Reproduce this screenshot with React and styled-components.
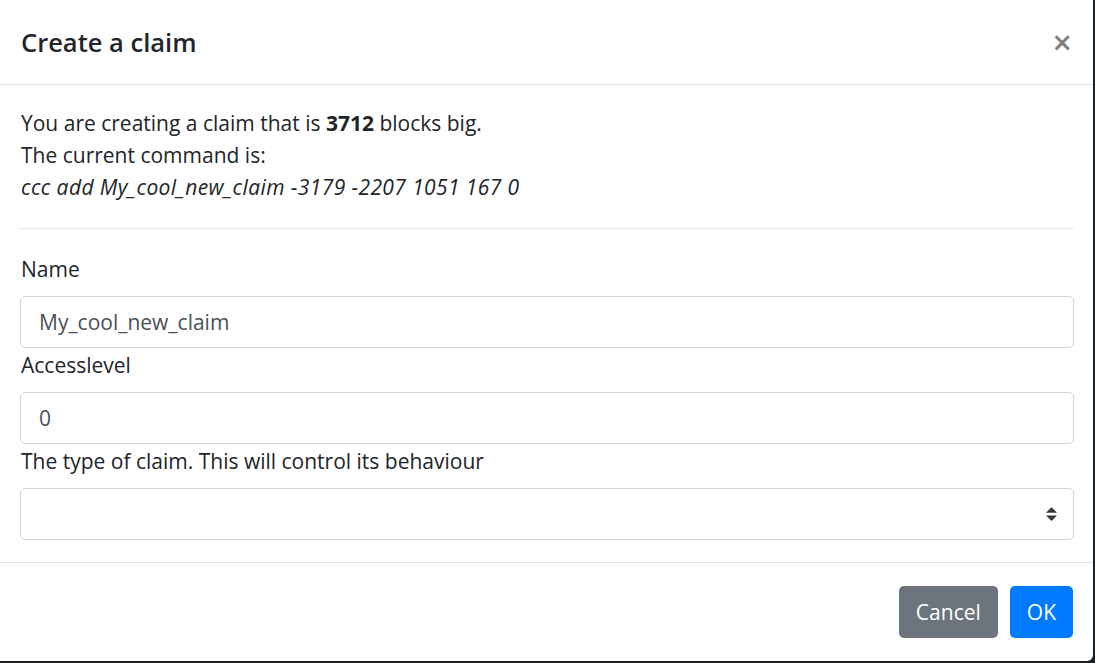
import React, { useState } from "react";
import styled, { createGlobalStyle } from "styled-components";

const GlobalStyle = createGlobalStyle`
  html, body {
    margin: 0;
    padding: 0;
    background-color: #1d2023;
    font-family: "Open Sans", "Noto Sans", sans-serif;
  }
  * {
    box-sizing: border-box;
  }
`;

const App = () => {
  const [name, setName] = useState("My_cool_new_claim");
  const [access, setAccess] = useState("0");
  const [type, setType] = useState("");

  return (
    <>
      <GlobalStyle />
      <Page>
        <Modal>
          <Header>
            <Title>Create a claim</Title>
            <Close aria-label="Close">&times;</Close>
          </Header>

          <Body>
            <Info>
              You are creating a claim that is <b>3712</b> blocks big.
              <br />
              The current command is:
              <br />
              <i>ccc add My_cool_new_claim -3179 -2207 1051 167 0</i>
            </Info>
            <Divider />

            <Label>Name</Label>
            <Input
              type="text"
              value={name}
              onChange={(e) => setName(e.target.value)}
            />

            <Label>Accesslevel</Label>
            <Input
              type="number"
              value={access}
              onChange={(e) => setAccess(e.target.value)}
            />

            <Label>The type of claim. This will control its behaviour</Label>
            <SelectWrap>
              <Select value={type} onChange={(e) => setType(e.target.value)}>
                <option value=""></option>
              </Select>
              <Arrows width="11" height="14" viewBox="0 0 4 5">
                <path fill="#343a40" d="M2 0L0 2h4zm0 5L0 3h4z" />
              </Arrows>
            </SelectWrap>
          </Body>

          <Footer>
            <Button variant="secondary">Cancel</Button>
            <Button variant="primary">OK</Button>
          </Footer>
        </Modal>
      </Page>
    </>
  );
};

export default App;

const Page = styled.div`
  width: 1095px;
  height: 663px;
  overflow: hidden;
`;

const Modal = styled.div`
  width: 1093px;
  height: 661px;
  background-color: #fff;
  border-bottom-right-radius: 6px;
  color: #212529;
  display: flex;
  flex-direction: column;
`;

const Header = styled.div`
  height: 85px;
  padding: 0 21px;
  border-bottom: 1px solid #dee2e6;
  display: flex;
  align-items: center;
  justify-content: space-between;
`;

const Title = styled.h5`
  margin: 0;
  font-size: 25.5px;
  font-weight: 600;
  line-height: 40px;
`;

const Close = styled.button`
  border: none;
  background: transparent;
  padding: 0;
  font-family: "Open Sans", sans-serif;
  font-size: 34px;
  font-weight: 600;
  line-height: 1;
  color: #000;
  opacity: 0.5;
  text-shadow: 0 1px 0 #fff;
  cursor: pointer;
`;

const Body = styled.div`
  padding: 22px 19px 22px 20px;
  display: flex;
  flex-direction: column;
  font-size: 21px;
  line-height: 32px;
`;

const Info = styled.p`
  margin: 0;
  padding-left: 1px;

  b {
    font-weight: 700;
  }

  i {
    letter-spacing: 0.4px;
  }
`;

const Divider = styled.hr`
  width: 100%;
  margin: 25px 0 24px;
  border: none;
  border-top: 1px solid #e3e5e8;
`;

const Label = styled.label`
  display: block;
  padding-left: 1px;
  margin-bottom: 11px;
  line-height: 32px;
`;

const Input = styled.input`
  width: 100%;
  height: 52px;
  padding: 0 18px;
  margin-bottom: 1px;
  font-family: inherit;
  font-size: 21px;
  color: #495057;
  background-color: #fff;
  border: 1px solid #ced4da;
  border-radius: 5px;
  outline: none;
  appearance: textfield;

  &::-webkit-outer-spin-button,
  &::-webkit-inner-spin-button {
    -webkit-appearance: none;
    margin: 0;
  }
`;

const SelectWrap = styled.div`
  position: relative;
`;

const Select = styled.select`
  width: 100%;
  height: 52px;
  padding: 0 18px;
  font-family: inherit;
  font-size: 21px;
  color: #495057;
  background-color: #fff;
  border: 1px solid #ced4da;
  border-radius: 5px;
  outline: none;
  appearance: none;
`;

const Arrows = styled.svg`
  position: absolute;
  right: 17px;
  top: 19px;
  pointer-events: none;
`;

const Footer = styled.div`
  border-top: 1px solid #dee2e6;
  padding: 23px 20px 0;
  display: flex;
  justify-content: flex-end;
  gap: 12px;
`;

const Button = styled.button`
  height: 52px;
  padding: 0 16px;
  font-family: inherit;
  font-size: 21px;
  color: #fff;
  border: 1px solid transparent;
  border-radius: 5px;
  background-color: ${(p) => (p.variant === "primary" ? "#007bff" : "#6c757d")};
  cursor: pointer;
`;
